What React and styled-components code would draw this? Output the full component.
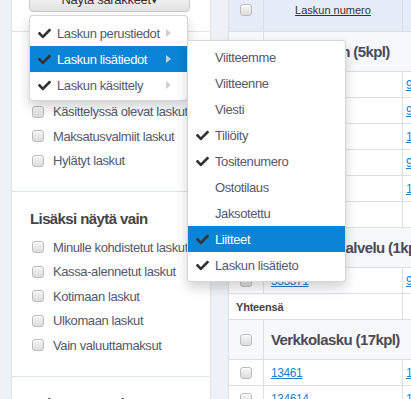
import React from "react";
import styled, { createGlobalStyle } from "styled-components";
import { FaCheck } from "react-icons/fa";

const GlobalStyle = createGlobalStyle`
  html, body {
    margin: 0;
    padding: 0;
  }
  body {
    background: #eef2f7;
    font-family: "Liberation Sans", Arial, sans-serif;
  }
`;

const Page = styled.div`
  width: 411px;
  height: 399px;
  overflow: hidden;
`;

const Layout = styled.div`
  display: flex;
  align-items: flex-start;
  gap: 17px;
  padding-left: 11px;
  margin-top: -14px;
`;

const Sidebar = styled.aside`
  position: relative;
  z-index: 2;
  flex: 0 0 200px;
  box-sizing: border-box;
  min-height: 440px;
  background: #fff;
  border-left: 1px solid #dfe4ea;
  border-right: 1px solid #dfe4ea;
`;

const TopBar = styled.div`
  height: 45px;
  padding-left: 17px;
  border-bottom: 1px solid #dfe4ea;
`;

const Dropdown = styled.div`
  position: relative;
  width: 161px;
`;

const ToggleButton = styled.button`
  width: 161px;
  height: 26px;
  box-sizing: border-box;
  border: 1px solid #c8c8c8;
  border-radius: 4px;
  background: linear-gradient(#ffffff, #e2e2e2);
  color: #333;
  font-family: inherit;
  font-size: 13px;
  letter-spacing: -0.3px;
  padding: 0;
  cursor: pointer;
`;

const Menu = styled.ul`
  position: absolute;
  top: ${(p) => (p.$sub ? "-6px" : "calc(100% + 3px)")};
  left: ${(p) => (p.$sub ? "100%" : "0")};
  width: 159px;
  box-sizing: border-box;
  margin: 0;
  padding: ${(p) => (p.$sub ? "3px 0" : "4px 0 2px")};
  list-style: none;
  background: #fff;
  border: 1px solid rgba(0, 0, 0, 0.16);
  border-radius: ${(p) => (p.$sub ? "0 4px 4px 4px" : "4px")};
  box-shadow: 0 6px 12px rgba(0, 0, 0, 0.175);
`;

const MenuItem = styled.li`
  position: relative;
  display: flex;
  align-items: center;
  height: 26px;
  padding: 0 16px 0 8px;
  background: ${(p) => (p.$active ? "#0a84d4" : "transparent")};
  color: ${(p) => (p.$active ? "#fff" : "#555a6c")};
  font-size: 13px;
  letter-spacing: -0.4px;
  white-space: nowrap;
`;

const CheckSlot = styled.span`
  display: flex;
  align-items: center;
  width: 19px;
  flex: 0 0 19px;
  color: #333;
`;

const ItemLabel = styled.span`
  flex: 1;
`;

const Caret = styled.span`
  width: 0;
  height: 0;
  border-top: 4px solid transparent;
  border-bottom: 4px solid transparent;
  border-left: 5px solid #cfcfcf;
`;

const Section = styled.div`
  padding: 17px 18px 18px;
  border-bottom: 1px solid #dfe4ea;
`;

const Heading = styled.h3`
  margin: 0 0 6px;
  height: 20px;
  line-height: 20px;
  font-size: 15px;
  font-weight: bold;
  letter-spacing: -0.6px;
  color: #444;
  white-space: nowrap;
`;

const CheckRow = styled.label`
  display: flex;
  align-items: center;
  gap: 9px;
  height: 24.5px;
  padding-left: 2px;
  font-size: 13px;
  letter-spacing: -0.4px;
  color: #55586e;
  white-space: nowrap;
`;

const Box = styled.span`
  display: inline-block;
  width: 12px;
  height: 12px;
  flex: 0 0 12px;
  box-sizing: border-box;
  border: 1px solid #bcbcbc;
  border-radius: 3px;
  background: linear-gradient(#f6f6f6, #dcdcdc);
  box-shadow: inset 0 1px 1px rgba(255, 255, 255, 0.8);
`;

const TableArea = styled.div`
  flex: 1;
  min-width: 0;
  overflow: hidden;
  background: #fff;
  border-left: 1px solid #dcdfe4;
`;

const Row = styled.div`
  display: grid;
  grid-template-columns: ${(p) => p.$cols || "35px 139px 220px"};
  height: ${(p) => p.$h || 26}px;
  box-sizing: border-box;
  border-bottom: 1px solid #dcdfe4;
  background: ${(p) => p.$bg || "#fff"};
`;

const Cell = styled.div`
  display: flex;
  align-items: center;
  justify-content: ${(p) => (p.$center ? "center" : "flex-start")};
  box-sizing: border-box;
  padding: ${(p) => p.$pad || "0"};
  border-right: ${(p) => (p.$line ? "1px solid #dcdfe4" : "none")};
  white-space: nowrap;
  overflow: hidden;
`;

const HeadLink = styled.a`
  color: #333;
  font-size: 11px;
  text-decoration: underline;
`;

const NumLink = styled.a`
  color: #1c7fcf;
  font-size: 12px;
  letter-spacing: -0.4px;
  text-decoration: underline;
`;

const GroupTitle = styled.span`
  font-size: 15px;
  font-weight: bold;
  letter-spacing: -0.6px;
  color: #4a4b58;
`;

const TotalLabel = styled.span`
  font-size: 11px;
  font-weight: bold;
  letter-spacing: -0.2px;
  color: #444;
`;

const mainItems = [
  { label: "Laskun perustiedot" },
  { label: "Laskun lisätiedot", active: true },
  { label: "Laskun käsittely" },
];

const subItems = [
  { label: "Viitteemme", checked: false },
  { label: "Viitteenne", checked: false },
  { label: "Viesti", checked: false },
  { label: "Tiliöity", checked: true },
  { label: "Tositenumero", checked: true },
  { label: "Ostotilaus", checked: false },
  { label: "Jaksotettu", checked: false },
  { label: "Liitteet", checked: true, active: true },
  { label: "Laskun lisätieto", checked: true },
];

const groups = [
  {
    title: "Tuntematon (5kpl)",
    rows: [
      ["13452", "9865"],
      ["13455", "9871"],
      ["13457", "1023"],
      ["13458", "9311"],
      ["13459", "1120"],
    ],
    total: true,
  },
  {
    title: "Skannauspalvelu (1kpl)",
    rows: [["533371", "9402"]],
    total: true,
  },
  {
    title: "Verkkolasku (17kpl)",
    rows: [
      ["13461", "1204"],
      ["134614", "1187"],
    ],
  },
];

const Check = () => <FaCheck size={13} />;

const App = () => (
  <Page>
    <GlobalStyle />
    <Layout>
      <Sidebar>
        <TopBar>
          <Dropdown>
            <ToggleButton>Näytä sarakkeet▾</ToggleButton>
            <Menu>
              {mainItems.map((item) => (
                <MenuItem key={item.label} $active={item.active}>
                  <CheckSlot>
                    <Check />
                  </CheckSlot>
                  <ItemLabel>{item.label}</ItemLabel>
                  <Caret />
                  {item.active && (
                    <Menu $sub>
                      {subItems.map((sub) => (
                        <MenuItem key={sub.label} $active={sub.active}>
                          <CheckSlot>{sub.checked && <Check />}</CheckSlot>
                          <ItemLabel>{sub.label}</ItemLabel>
                        </MenuItem>
                      ))}
                    </Menu>
                  )}
                </MenuItem>
              ))}
            </Menu>
          </Dropdown>
        </TopBar>

        <Section>
          <Heading>Näytä laskut</Heading>
          {[
            "Kaikki laskut",
            "Käsittelyssä olevat laskut",
            "Maksatusvalmiit laskut",
            "Hylätyt laskut",
          ].map((t) => (
            <CheckRow key={t}>
              <Box />
              {t}
            </CheckRow>
          ))}
        </Section>

        <Section>
          <Heading>Lisäksi näytä vain</Heading>
          {[
            "Minulle kohdistetut laskut",
            "Kassa-alennetut laskut",
            "Kotimaan laskut",
            "Ulkomaan laskut",
            "Vain valuuttamaksut",
          ].map((t) => (
            <CheckRow key={t}>
              <Box />
              {t}
            </CheckRow>
          ))}
        </Section>

        <Section>
          <Heading>Päivämäärärajaus</Heading>
        </Section>
      </Sidebar>

      <TableArea>
        <Row $h={46} $bg="#e7edf8">
          <Cell $line $center $pad="3px 0 0">
            <Box />
          </Cell>
          <Cell $line $center $pad="3px 0 0">
            <HeadLink>Laskun numero</HeadLink>
          </Cell>
          <Cell />
        </Row>

        {groups.map((g) => (
          <React.Fragment key={g.title}>
            <Row $h={40} $bg="#f7f8fb" $cols="35px 1fr">
              <Cell $line $center>
                <Box />
              </Cell>
              <Cell $pad="0 0 0 7px">
                <GroupTitle>{g.title}</GroupTitle>
              </Cell>
            </Row>
            {g.rows.map(([num, other]) => (
              <Row key={num}>
                <Cell $line $center>
                  <Box />
                </Cell>
                <Cell $line $pad="0 0 0 7px">
                  <NumLink>{num}</NumLink>
                </Cell>
                <Cell $pad="0 0 0 3px">
                  <NumLink>{other}</NumLink>
                </Cell>
              </Row>
            ))}
            {g.total && (
              <Row $cols="174px 220px">
                <Cell $line $pad="0 0 0 7px">
                  <TotalLabel>Yhteensä</TotalLabel>
                </Cell>
                <Cell />
              </Row>
            )}
          </React.Fragment>
        ))}
      </TableArea>
    </Layout>
  </Page>
);

export default App;
